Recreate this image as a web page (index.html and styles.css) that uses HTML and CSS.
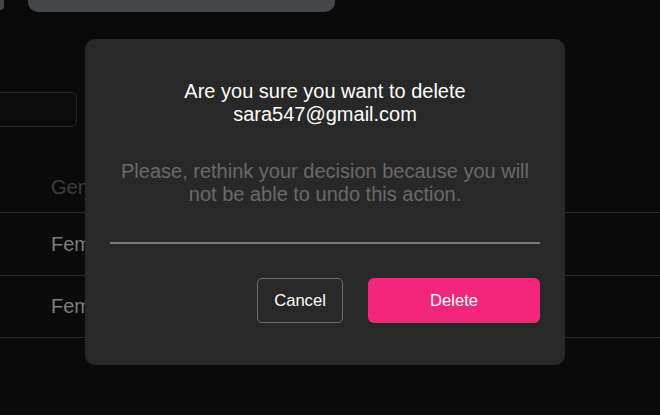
FILE: index.html
```html
<!DOCTYPE html>
<html lang="en">
<head>
<meta charset="utf-8">
<title>Delete user</title>
<link rel="stylesheet" href="styles.css">
</head>
<body>
<div class="page">
  <div class="topbar">
    <div class="corner"></div>
    <div class="searchbar"></div>
  </div>
  <div class="filter"></div>
  <div class="table">
    <div class="row head"><span class="cell">Gender</span></div>
    <div class="row"><span class="cell">Female</span></div>
    <div class="row r2"><span class="cell">Female</span><span class="status">o</span></div>
  </div>
</div>

<div class="modal">
  <h2 class="title">Are you sure you want to delete<br>sara547@gmail.com</h2>
  <p class="text">Please, rethink your decision because you will<br>not be able to undo this action.</p>
  <hr class="divider">
  <div class="actions">
    <button class="btn cancel">Cancel</button>
    <button class="btn delete">Delete</button>
  </div>
</div>
</body>
</html>
```

FILE: styles.css
```css
* { box-sizing: border-box; }
html, body {
  margin: 0;
  height: 100%;
}
body {
  background: #0a0a0a;
  font-family: "Liberation Sans", Arial, sans-serif;
  overflow: hidden;
  position: relative;
}
.page {
  width: 660px;
}
.topbar {
  display: flex;
  align-items: flex-start;
  gap: 24px;
}
.corner {
  width: 4px;
  height: 10px;
  background: #45464a;
  border-bottom-right-radius: 4px;
}
.searchbar {
  width: 307px;
  height: 12px;
  background: #45464a;
  border-radius: 0 0 10px 10px;
}
.filter {
  margin-top: 80px;
  margin-left: -10px;
  width: 87px;
  height: 35px;
  border: 1px solid #262626;
  border-radius: 6px;
  background: #0b0b0b;
}
.table {
  margin-top: 35px;
}
.row {
  display: flex;
  align-items: center;
  height: 63px;
  border-bottom: 1px solid #2b2b2b;
  color: #7d7d7d;
  font-size: 20px;
}
.row.head {
  height: 51px;
  color: #3e3e3e;
}
.row.r2 {
  height: 62px;
}
.cell {
  padding-left: 51px;
}
.status {
  margin-left: auto;
  margin-right: 95px;
  color: #5e4a12;
  font-size: 20px;
}
.modal {
  position: absolute;
  left: 85px;
  top: 39px;
  width: 480px;
  height: 326px;
  background: #282828;
  border-radius: 10px;
  padding: 41px 25px 0;
  text-align: center;
}
.title {
  margin: 0;
  font-size: 20px;
  font-weight: normal;
  line-height: 23px;
  color: #ffffff;
}
.text {
  margin: 34px 0 0;
  font-size: 20px;
  line-height: 23px;
  color: #6a6a6a;
}
.divider {
  margin: 36px 0 0;
  border: 0;
  height: 2px;
  background: #7a7a7a;
}
.actions {
  margin-top: 34px;
  display: flex;
  justify-content: flex-end;
  gap: 25px;
}
.btn {
  height: 45px;
  font-family: "Liberation Sans", Arial, sans-serif;
  font-size: 16.6px;
  color: #ffffff;
  cursor: pointer;
}
.cancel {
  width: 86px;
  background: transparent;
  border: 1px solid #6e6e6e;
  border-radius: 5px;
}
.delete {
  width: 172px;
  background: #f3267a;
  border: 0;
  border-radius: 6px;
}
```
